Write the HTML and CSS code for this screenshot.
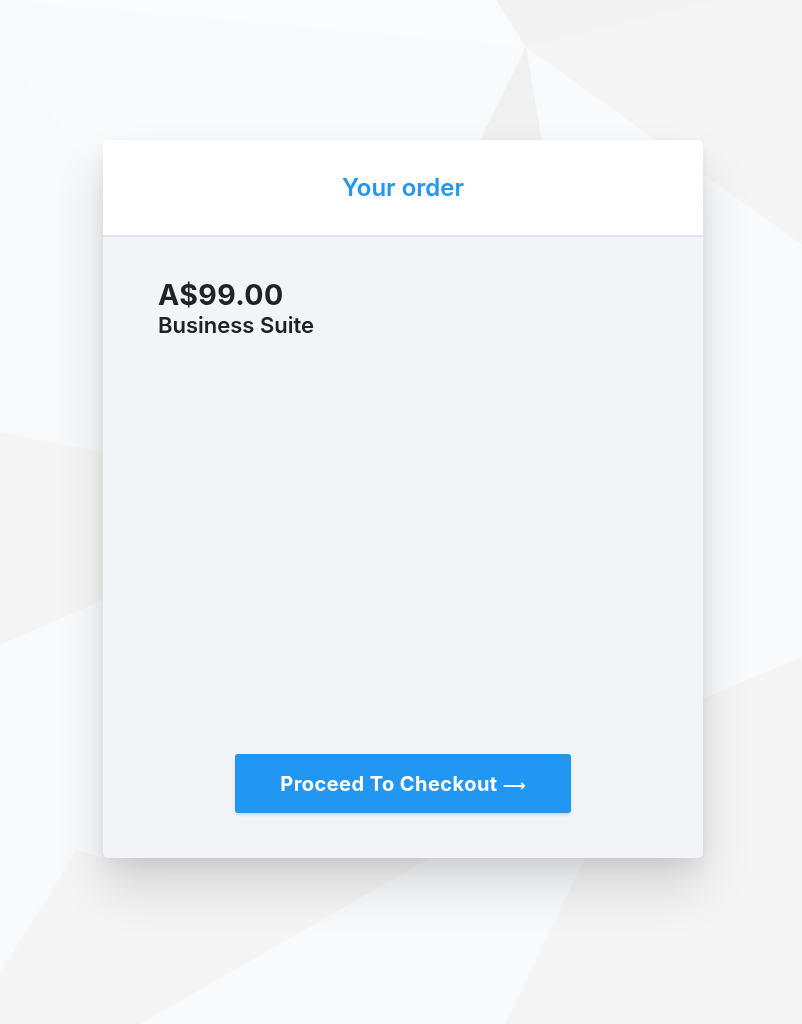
FILE: index.html
```html
<!DOCTYPE html>
<html lang="en">
<head>
<meta charset="utf-8">
<title>Your order</title>
<link rel="stylesheet" href="styles.css">
</head>
<body>
<svg class="bg" viewBox="0 0 802 1024" preserveAspectRatio="none" aria-hidden="true">
  <rect x="0" y="0" width="802" height="1024" fill="#f5f5f5"/>
  <polygon points="0,0 496,0 526,47 470,170 300,420 103,452 0,432" fill="#f9fafb"/>
  <polygon points="0,0 496,0 526,47" fill="#fafbfc"/>
  <polygon points="0,50 103,180 103,452 0,432" fill="#f8f9fa"/>
  <polygon points="496,0 716,0 526,47" fill="#f3f3f3"/>
  <polygon points="716,0 802,0 802,245 526,47" fill="#f5f5f5"/>
  <polygon points="526,47 480,140 470,300 560,300 542,140" fill="#f1f1f1"/>
  <polygon points="526,47 542,140 560,300 802,300 802,245" fill="#f9fafb"/>
  <polygon points="700,300 802,300 802,657 700,700" fill="#f9fafb"/>
  <polygon points="700,700 802,657 802,842 700,780" fill="#f5f5f6"/>
  <polygon points="0,645 103,600 103,858 77,850 0,973" fill="#f9fafb"/>
  <polygon points="430,858 585,858 505,1024 140,1024" fill="#f9fafb"/>
</svg>
<main class="page">
  <section class="card">
    <header class="card-header">
      <h1 class="title">Your order</h1>
    </header>
    <div class="card-body">
      <div class="item">
        <div class="price">A$99.00</div>
        <div class="product">Business Suite</div>
      </div>
      <button class="checkout" type="button">Proceed To Checkout <span class="arrow">&#x27F6;</span></button>
    </div>
  </section>
</main>
</body>
</html>
```

FILE: styles.css
```css
html, body {
  margin: 0;
  padding: 0;
  height: 100%;
}

body {
  background: #f5f5f5;
  font-family: "Inter", "Noto Sans", sans-serif;
  color: #202228;
  overflow: hidden;
}

.bg {
  position: fixed;
  left: 0;
  top: 0;
  width: 100%;
  height: 100%;
  z-index: 0;
}

.page {
  position: relative;
  z-index: 1;
  display: flex;
  justify-content: center;
  padding-top: 140px;
  padding-left: 4px;
}

.card {
  width: 600px;
  height: 718px;
  border-radius: 5px;
  overflow: hidden;
  display: flex;
  flex-direction: column;
  background: #f3f4f8;
  box-shadow: 0 30px 50px rgba(0, 0, 0, 0.13), 0 10px 22px rgba(0, 0, 0, 0.06), 0 0 12px rgba(0, 0, 0, 0.04);
}

.card-header {
  height: 95px;
  background: #ffffff;
  border-bottom: 2px solid #e4e5ea;
  display: flex;
  align-items: center;
  justify-content: center;
  flex-shrink: 0;
}

.title {
  margin: 0;
  font-size: 24px;
  font-weight: 600;
  color: #2196f3;
}

.card-body {
  flex: 1;
  display: flex;
  flex-direction: column;
  padding: 41px 55px 45px;
}

.price {
  font-size: 28.5px;
  font-weight: 700;
  line-height: 34px;
  letter-spacing: 0.4px;
}

.product {
  font-size: 22px;
  font-weight: 600;
  line-height: 26px;
}

.checkout {
  margin-top: auto;
  align-self: center;
  width: 336px;
  height: 59px;
  border: none;
  border-radius: 3px;
  background: #2196f3;
  color: #ffffff;
  font-family: "Inter", "Noto Sans", sans-serif;
  font-size: 20px;
  font-weight: 700;
  letter-spacing: 0.45px;
  box-shadow: 0 2px 3px rgba(0, 0, 0, 0.12);
  cursor: pointer;
}

.arrow {
  font-family: "DejaVu Sans", sans-serif;
  font-weight: 700;
  font-size: 16px;
  letter-spacing: 0;
}
```
